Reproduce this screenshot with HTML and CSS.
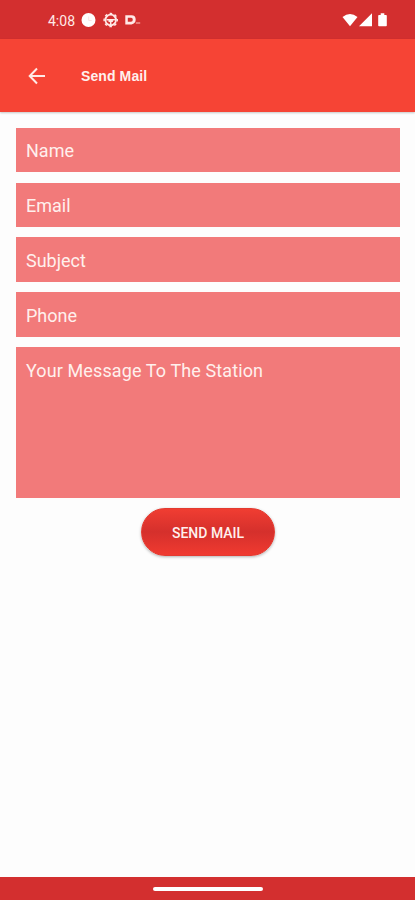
FILE: index.html
```html
<!DOCTYPE html>
<html lang="en">
<head>
<meta charset="utf-8">
<title>Send Mail</title>
<link rel="stylesheet" href="styles.css">
</head>
<body>
<div class="status">
  <span class="clock">4:08</span>
  <svg class="notices" width="62" height="16" viewBox="0 0 62 16">
    <circle cx="7.5" cy="8" r="7" fill="#fff"/>
    <path d="M7.700 4.500v4h3" fill="none" stroke="#fbe4e4" stroke-width="1"/>
    <g fill="none" stroke="#ffe9e7">
      <circle cx="29.700" cy="8" r="5.300" stroke-width="1.800"/>
      <circle cx="29.700" cy="8" r="6.600" stroke-width="1.400" stroke-dasharray="2.600 2.584" stroke-dashoffset="1.300"/>
      <path d="M25.500 7.700h8.400M29.700 8v5M27.500 9.200h4.400" stroke-width="1.600"/>
    </g>
    <path fill="#ffe9e7" fill-rule="evenodd" d="M44.300 3.300h6.200q4.200 0 4.200 4.300t-4.200 4.800h-6.200zM46.800 5.800v3.900h3.200q1.800 0 1.800-2t-1.800-1.900z"/>
    <path d="M54.800 11h4.400" stroke="#ed8e89" stroke-width="1.600"/>
  </svg>
  <svg class="signals" width="46" height="16" viewBox="0 0 46 16" fill="#fff">
    <path d="M0.500 5Q8 -0.800 15.500 5L8 14.300z"/>
    <path d="M30 1.300V14.300H17z"/>
    <path d="M37 3h1.700V1.300h3.600V3H44q.8 0 .8.8v9.700q0 .8-.8.8h-7q-.8 0-.8-.8V3.800q0-.8.8-.8z"/>
  </svg>
</div>
<header class="appbar">
  <svg class="back" width="18" height="18" viewBox="0 0 18 18" fill="none" stroke="#ffeae6" stroke-width="2"><path d="M17 9H2M9 1.500L1.700 9 9 16.500"/></svg>
  <h1 class="title">Send Mail</h1>
</header>
<main class="form">
  <div class="field">Name</div>
  <div class="field">Email</div>
  <div class="field">Subject</div>
  <div class="field">Phone</div>
  <div class="field message">Your Message To The Station</div>
  <button class="send">SEND MAIL</button>
</main>
<footer class="navbar"><div class="handle"></div></footer>
</body>
</html>
```
FILE: styles.css
```css
* { box-sizing: border-box; }
body {
  margin: 0;
  height: 900px;
  display: flex;
  flex-direction: column;
  overflow: hidden;
  background: #fdfdfd;
  font-family: Roboto, sans-serif;
}
.status {
  flex: none;
  height: 39px;
  padding: 0 27px 0 48px;
  display: flex;
  align-items: center;
  background: #d32f2f;
  color: #ffe9e7;
}
.clock { width: 33px; font-size: 14px; line-height: 20px; padding-top: 2px; white-space: nowrap; }
.signals { margin-left: auto; }
.appbar {
  flex: none;
  height: 73px;
  padding: 0 28px;
  display: flex;
  align-items: center;
  background: #f64435;
  box-shadow: 0 1px 2px rgba(0, 0, 0, .22);
}
.title {
  margin: 0 0 0 35px;
  font: bold 14px/20px "Liberation Sans", Arial, sans-serif;
  letter-spacing: .1px;
  color: #fff0ed;
}
.form {
  flex: 1;
  padding: 15.7px 15px 0 16px;
  display: flex;
  flex-direction: column;
}
.field {
  flex: none;
  height: 44.5px;
  margin-bottom: 10.33px;
  padding: .55px 10px 0;
  background: #f27a7a;
  color: #fff0ed;
  font-size: 18px;
  line-height: 46px;
}
.message { height: 151px; margin-bottom: 10px; letter-spacing: .11px; }
.send {
  align-self: center;
  width: 134px;
  height: 48px;
  padding: 2px 0 0;
  border: 1px solid #e33a30;
  border-radius: 24px;
  background: linear-gradient(#f03d32, #d5302c 50%, #f03a30);
  box-shadow: 0 1px 3px rgba(0, 0, 0, .3);
  color: #fff0ed;
  font: 500 14px/20px Roboto, sans-serif;
}
.navbar {
  flex: none;
  height: 23px;
  display: flex;
  align-items: center;
  justify-content: center;
  background: #d32f2f;
}
.handle { width: 110px; height: 4px; border-radius: 2px; background: #fff; }
```
